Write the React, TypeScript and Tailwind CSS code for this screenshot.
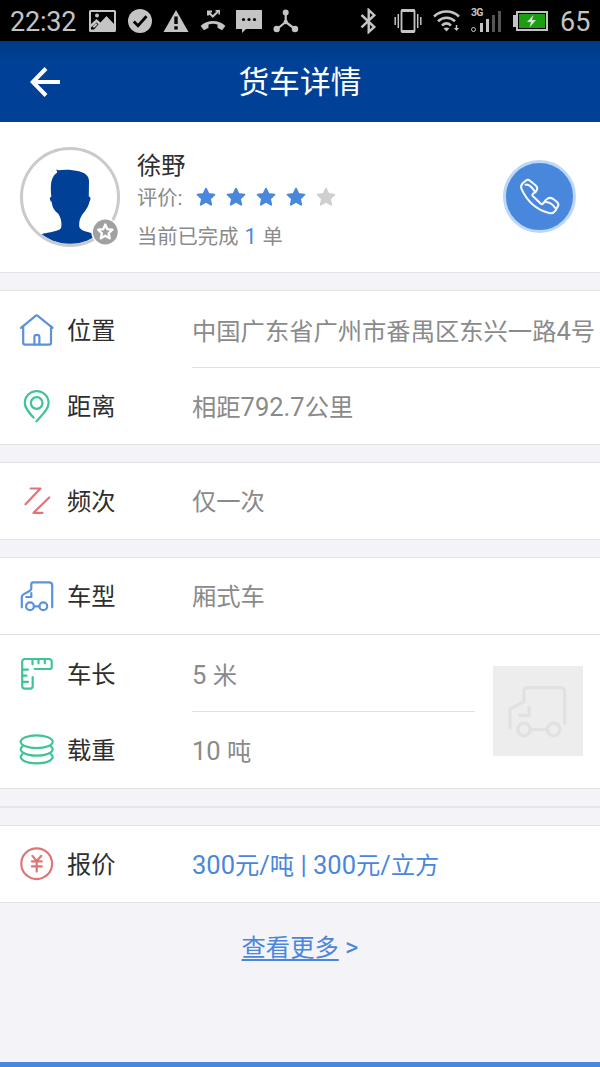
import type { ReactNode } from 'react';

const FONT = "font-[Roboto,'Noto_Sans_CJK_SC',sans-serif]";

const STAR = 'M10 1.6 12.5 7 18.4 7.7 14 11.8 15.2 17.8 10 14.8 4.8 17.8 6 11.8 1.6 7.7 7.5 7Z';

/* Iconos de línea de las filas, todos en una caja de 34x34 */
function LineIcon({ className, children }: { className: string; children: ReactNode }) {
  return (
    <svg
      viewBox="0 0 34 34"
      className={`h-[34px] w-[34px] shrink-0 overflow-visible ${className}`}
      fill="none"
      stroke="currentColor"
      strokeWidth="2.2"
      strokeLinecap="round"
      strokeLinejoin="round"
    >
      {children}
    </svg>
  );
}

const HomeIcon = () => (
  <LineIcon className="text-[#5b92dc]">
    <path d="M1 14.8 15.6 2.8Q16.7 1.9 17.8 2.8L32.6 14.8" />
    <path d="M3.2 13.5V29.7Q3.2 31.6 5.1 31.6H29.1Q31 31.6 31 29.7V13.5" />
    <path d="M14.4 31.4V24Q14.4 21.8 16.9 21.8T19.4 24V31.4" />
  </LineIcon>
);

const PinIcon = () => (
  <LineIcon className="text-[#3fc493]">
    <path d="M13.6 28.6C9 23.5 4.8 19 4.8 14A11.9 11.9 0 0 1 28.6 14C28.6 20.5 22 26 16.4 32.4" />
    <circle cx="16.7" cy="14" r="5.8" />
  </LineIcon>
);

const FrequencyIcon = () => (
  <LineIcon className="text-[#e07474]">
    <path d="M10.7 4.5H20.5L5.5 20.2M29.2 13.5 13.5 28.8H22.5" />
  </LineIcon>
);

const TruckIcon = () => (
  <LineIcon className="text-[#5b92dc]">
    <path d="M1.8 28.3V18Q1.8 16.3 3.5 15.4L9.5 12Q11.3 11 11.3 9.5V5.2Q11.3 3.3 13.2 3.3H29Q32.2 3.3 32.2 6.5V28.3" />
    <path d="M11.3 14V18H6.3" />
    <circle cx="10" cy="27.3" r="3.9" />
    <circle cx="23.3" cy="27.3" r="3.9" />
    <path d="M13.9 27.3H19.4" />
  </LineIcon>
);

const RulerIcon = () => (
  <LineIcon className="text-[#3fc493]">
    <path d="M14.7 12H30Q31.7 12 31.7 10.3V4.7Q31.7 2 29 2H5Q2.2 2 2.2 4.8V28.9Q2.2 31.6 4.9 31.6H10Q12.7 31.6 12.7 28.9V20.2" />
    <path d="M12.5 2.5V7.3M18.5 2.5V6.3M24.8 2.5V6.3M2.5 12.6H8M2.5 18.6H6.5M2.5 24.8H8" />
  </LineIcon>
);

const StackIcon = () => (
  <LineIcon className="text-[#3fc493]">
    <ellipse cx="16.7" cy="8.8" rx="16" ry="6.4" />
    <path d="M2.2 13.6A16 6.4 0 1 0 31.2 13.6M2.2 21.3A16 6.4 0 1 0 31.2 21.3" />
  </LineIcon>
);

const PriceIcon = () => (
  <LineIcon className="text-[#e07474]">
    <circle cx="16.7" cy="16.7" r="15.4" />
    <path d="M12.4 8.9 16.7 14 21.2 8.9M16.7 14V24.6M11.9 14.4H21.7M11.9 19.4H21.7" />
  </LineIcon>
);

function StatusBar() {
  return (
    <div className="flex h-[41px] items-center bg-black pl-[10px] text-[27px] leading-none text-[#c4c4c4]">
      <span className="w-[79px] pt-[3px] tracking-[-0.2px]">22:32</span>
      {/* Notificaciones */}
      <svg viewBox="0 0 27 22" className="h-[22px] w-[27px]" fill="currentColor">
        <path fillRule="evenodd" d="M1.5 0H25.5Q27 0 27 1.5V20.5Q27 22 25.5 22H1.5Q0 22 0 20.5V1.5Q0 0 1.5 0ZM2 2V14L7.5 9 11.5 12.5 17.5 6 25 14V2Z" />
        <path d="M2 17.5 7.5 12.5 9.5 14.2 5 19.5H2Z" fill="#000" />
        <path d="M3.5 16.5 7 13 8.5 14.5 5 18Z" />
        <circle cx="8" cy="5.5" r="2" />
      </svg>
      <svg viewBox="0 0 24 24" className="ml-[12px] h-6 w-6">
        <circle cx="12" cy="12" r="12" fill="currentColor" />
        <path d="M5.8 12.5 10 16.8 18.5 7.3" fill="none" stroke="#000" strokeWidth="2.8" />
      </svg>
      <svg viewBox="0 0 26 24" className="ml-[11px] h-6 w-[26px]">
        <path d="M13 1 25.5 23H.5Z" fill="currentColor" />
        <path d="M11.3 7.5H14.7V15H11.3ZM11.3 17.2H14.7V20.4H11.3Z" fill="#000" />
      </svg>
      <svg viewBox="0 0 26 24" className="ml-[11px] h-6 w-[26px]" fill="none" stroke="currentColor">
        <path d="M8 6.5V2.5H12M8.5 3 12.8 7.5 18.5 2" strokeWidth="2" />
        <path d="M15.5 1.7H19.2V5.5" strokeWidth="1.6" />
        <path d="M.6 17C7 10.3 19 10.3 25.4 17L22 21.3 17.5 18.8V15.5C14.5 14.6 11.5 14.6 8.5 15.5V18.8L4 21.3Z" fill="currentColor" stroke="none" />
      </svg>
      <svg viewBox="0 0 26 24" className="ml-[10px] h-6 w-[26px]">
        <path d="M0 1H26V20H10L6 24V20H0Z" fill="currentColor" />
        <g fill="#000">
          <circle cx="7.5" cy="10.5" r="1.6" />
          <circle cx="13" cy="10.5" r="1.6" />
          <circle cx="18.5" cy="10.5" r="1.6" />
        </g>
      </svg>
      <svg viewBox="0 0 26 24" className="ml-[11px] h-6 w-[26px]" fill="currentColor">
        <path d="M12.7 3V13M12.7 13 4 20M12.7 13 22 20" stroke="currentColor" strokeWidth="2.2" />
        <circle cx="12.7" cy="3.5" r="3" />
        <circle cx="12.7" cy="13" r="2.2" />
        <circle cx="3.7" cy="20" r="3.2" />
        <circle cx="22" cy="20" r="3.2" />
      </svg>
      {/* Sistema */}
      <svg viewBox="0 0 17 26" className="ml-[61px] h-[26px] w-[17px]" fill="none" stroke="currentColor" strokeWidth="2.4">
        <path d="M1.5 7 14.3 19 8.7 24V2L14.3 7.2 1.5 19.3" />
      </svg>
      <svg viewBox="0 0 28 24" className="ml-[17px] h-6 w-[28px]" fill="none" stroke="currentColor">
        <rect x="7.5" y="1" width="13" height="22" rx="1" strokeWidth="1.8" />
        <path d="M7.5 1.8H20.5M7.5 22.2H20.5" strokeWidth="2.6" />
        <path d="M4.3 5V19M23.7 5V19M1.2 8V16M26.8 8V16" strokeWidth="1.5" />
      </svg>
      <svg viewBox="0 0 28 22" className="ml-[11px] h-[22px] w-[28px]" fill="none" stroke="currentColor" strokeWidth="2.6">
        <path d="M1 6.5C8-.2 19-.2 26 6.5M5 11.2C10 6.5 17 6.5 22 11.2M9 15.4C12 12.8 15 12.8 18 15.4" />
        <path d="M10.5 18.3Q13.5 16.6 16.5 18.3L13.5 21.5Z" fill="currentColor" stroke="none" />
        <path d="M23.5 15V18.5" strokeWidth="1.5" />
        <path d="M20.8 18H26.2L23.5 21Z" fill="currentColor" stroke="none" />
      </svg>
      <div className="ml-[10px] flex h-[23px] w-[31px] flex-col">
        <span className="text-[10.5px] leading-[8px] font-bold tracking-[-0.8px]">3G</span>
        <div className="-mt-[6px] flex items-end gap-[2.6px]">
          <i className="mr-[1px] h-[5px] w-[5px] rounded-full border border-current" />
          <i className="h-[9px] w-[3.5px] bg-current" />
          <i className="h-[13px] w-[3.5px] bg-current" />
          <i className="h-[17px] w-[3.5px] bg-[#555]" />
          <i className="h-[21px] w-[3.5px] bg-[#555]" />
        </div>
      </div>
      <svg viewBox="0 0 35 20" className="ml-[11px] h-5 w-[35px]">
        <path d="M0 4H4V16H0Z" fill="currentColor" />
        <rect x="4" y="1" width="30" height="18" fill="#1c9e12" stroke="currentColor" strokeWidth="2" />
        <rect x="5.5" y="2.5" width="27" height="15" fill="none" stroke="#000" strokeWidth="1" />
        <path d="M20.5 4 14 11H18L16.5 16.5 23 9H19Z" fill="#ddd" />
      </svg>
      <span className="ml-[12px] pt-[3px]">65</span>
    </div>
  );
}

function Header() {
  return (
    <header className="flex h-[81px] items-center bg-[#004097] bg-linear-to-b from-[#003a85] to-[#004097] to-25% pr-[30px] pl-[30px] text-white">
      <svg viewBox="0 0 31 30" className="h-[30px] w-[31px]" fill="none" stroke="currentColor" strokeWidth="4">
        <path d="M16 1.5 2.8 15 16 28.5M3 15H30" />
      </svg>
      <h1 className="flex-1 pt-[4px] pr-[31px] text-center text-[30.7px] leading-none">货车详情</h1>
    </header>
  );
}

function Profile() {
  const rating = 4;

  return (
    <section className="flex h-[151px] items-start border-b border-[#e2e2e5] bg-white pr-[24px] pl-5">
      <div className="relative mt-[25px] h-[100px] w-[100px]">
        <svg viewBox="0 0 100 100" className="h-full w-full">
          <clipPath id="avatar">
            <circle cx="50" cy="50" r="46.8" />
          </clipPath>
          <circle cx="50" cy="50" r="48.5" fill="#fff" stroke="#cacaca" strokeWidth="3" />
          <path
            clipPath="url(#avatar)"
            fill="#004097"
            d="M36.3 22.6 38.5 23.2C44 22.3 53 22.5 59 24.3C65 26 68.8 28.5 69 34L68.8 49.5C71 50 70.8 53 69.5 54.5C68.5 60 65 64 62 68C59.3 72 59 76 59.3 80C61 84 66 84.5 80 88.5V100H15V88.5C33 84.5 40 84 41.2 80.5C41.8 76 41.3 72 38.5 67C35 64 32.3 61 31.7 55C29.5 53.5 29.2 50.5 31.3 49.8C30.5 42 30.7 36 32 32.5C33 29 35 27 37.3 25.5Z"
          />
        </svg>
        <svg viewBox="0 0 28 28" className="absolute top-[71px] left-[71px] h-7 w-7">
          <circle cx="14.3" cy="14" r="14" fill="#fff" />
          <circle cx="14.3" cy="14" r="12.4" fill="#a0a0a0" />
          <path d={STAR} transform="translate(5.8 5.2) scale(.85)" fill="none" stroke="#fff" strokeWidth="2.7" strokeLinejoin="round" />
        </svg>
      </div>
      <div className="ml-[17px] flex-1 text-[20.3px] text-[#8a8a8a]">
        <h2 className="mt-[29px] text-[24.2px] leading-[30px] text-[#2e2e2e]">徐野</h2>
        <div className="mt-px flex h-[30px] items-center">
          <span className="w-[59px] pt-[2px] leading-none">评价:</span>
          <div className="flex gap-[10px]">
            {[0, 1, 2, 3, 4].map((i) => (
              <svg
                key={i}
                viewBox="0 0 20 20"
                className={`h-5 w-5 ${i < rating ? 'text-[#4987dc]' : 'text-[#cfcfcf]'}`}
              >
                <path d={STAR} fill="currentColor" stroke="currentColor" strokeWidth="1.8" strokeLinejoin="round" />
              </svg>
            ))}
          </div>
        </div>
        <p className="mt-[10px] leading-[30px]">
          当前已完成 <span className="mx-[1px] text-[21.5px] text-[#4987dc]">1</span> 单
        </p>
      </div>
      <button className="mt-[38px] h-[73px] w-[73px]">
        <svg viewBox="0 0 73 73" className="h-full w-full" fill="none" strokeLinecap="round" strokeLinejoin="round">
          <circle cx="36.5" cy="36.5" r="35" fill="#4987dc" stroke="#bcd8f7" strokeWidth="3" />
          <path
            stroke="#f2f9ff"
            strokeWidth="2.1"
            d="M18.4 28.6Q17.3 25.5 20 23L22.6 20.8Q25 19 27.3 21L32.8 25.5Q35 27.7 33.8 30.2Q33 32.3 30.5 33.4Q28.5 34.6 30 36.3L37.6 43.5Q39 45 40.6 43Q42.3 40 44.5 38.7Q47 37 50 38.8L54 42Q56.3 44.2 54.8 46.5L52.5 50.6Q50 54 46 53Q27 48 18.4 28.6ZM22.6 24.7Q27 24 31.3 30.8M42.8 42Q48.5 42.5 52 47.7"
          />
        </svg>
      </button>
    </section>
  );
}

/* Los caracteres latinos van un poco más grandes que los chinos */
function MixedText({ text }: { text: string }) {
  return (
    <span className="whitespace-pre">
      {text.split(/([\x20-\x7e]+)/).map((part, i) =>
        i % 2 === 1 ? (
          <span key={i} className="text-[25.5px]">
            {part}
          </span>
        ) : (
          part
        )
      )}
    </span>
  );
}

interface RowProps {
  icon: ReactNode;
  label: string;
  value: string;
  divider?: boolean;
  accent?: boolean;
}

function Row({ icon, label, value, divider, accent }: RowProps) {
  return (
    <div className={`flex items-center pl-5 text-[24.3px] whitespace-nowrap ${divider ? 'h-[77px]' : 'h-[76px]'}`}>
      {icon}
      <span className="ml-[13px] w-[125px] shrink-0 pt-[3px] text-[#2e2e2e]">{label}</span>
      <div
        className={`flex h-full min-w-0 flex-1 items-center border-b pt-[4px] ${divider ? 'border-[#e0e0e0]' : 'border-transparent'} ${accent ? 'text-[#4987dc]' : 'text-[#8a8a8a]'}`}
      >
        <MixedText text={value} />
      </div>
    </div>
  );
}

function Card({ children }: { children: ReactNode }) {
  return <section className="border-y border-[#e2e2e5] bg-white">{children}</section>;
}

export default function App() {
  return (
    <div className={`flex h-[1067px] w-[600px] flex-col overflow-hidden bg-[#f3f3f8] ${FONT}`}>
      <StatusBar />
      <Header />
      <Profile />

      <main className="mt-[17px] flex flex-1 flex-col">
        <Card>
          <Row icon={<HomeIcon />} label="位置" value="中国广东省广州市番禺区东兴一路4号" divider />
          <Row icon={<PinIcon />} label="距离" value="相距792.7公里" />
        </Card>

        <div className="mt-[17px]">
          <Card>
            <Row icon={<FrequencyIcon />} label="频次" value="仅一次" />
          </Card>
        </div>

        {/* Datos del vehículo */}
        <div className="mt-[17px]">
          <Card>
            <div className="border-b border-[#e2e2e5]">
              <Row icon={<TruckIcon />} label="车型" value="厢式车" />
            </div>
            <div className="flex items-center">
              <div className="w-[475px]">
                <Row icon={<RulerIcon />} label="车长" value="5 米" divider />
                <Row icon={<StackIcon />} label="载重" value="10 吨" />
              </div>
              <div className="mb-[2px] ml-[18px] h-[90px] w-[90px] bg-[#ededed]">
                <svg viewBox="0 0 90 90" fill="none" stroke="#e1e1e1" strokeWidth="3.2" strokeLinecap="round" strokeLinejoin="round">
                  <path d="M17 62V43L31 35.7V25Q31 21.7 34.3 21.7H67Q71.7 21.7 71.7 26.4V57.5" />
                  <path d="M36 41V49.3H26.5" />
                  <circle cx="31" cy="63.5" r="6.3" />
                  <circle cx="60.7" cy="63.5" r="6.3" />
                  <path d="M37.3 63.5H54.4" />
                </svg>
              </div>
            </div>
          </Card>
        </div>

        <div className="mt-[17px] h-[2px] bg-[#e6e6e9]" />

        <div className="mt-[17px]">
          <Card>
            <Row icon={<PriceIcon />} label="报价" value="300元/吨 | 300元/立方" accent />
          </Card>
        </div>

        <div className="mt-[26px] text-center text-[24.3px] leading-9 text-[#4987dc]">
          <a className="underline decoration-[1.5px] underline-offset-[3px]">查看更多</a>
          <span className="text-[25.5px]"> &gt;</span>
        </div>
      </main>

      <div className="h-[5px] bg-[#4987dc]" />
    </div>
  );
}
